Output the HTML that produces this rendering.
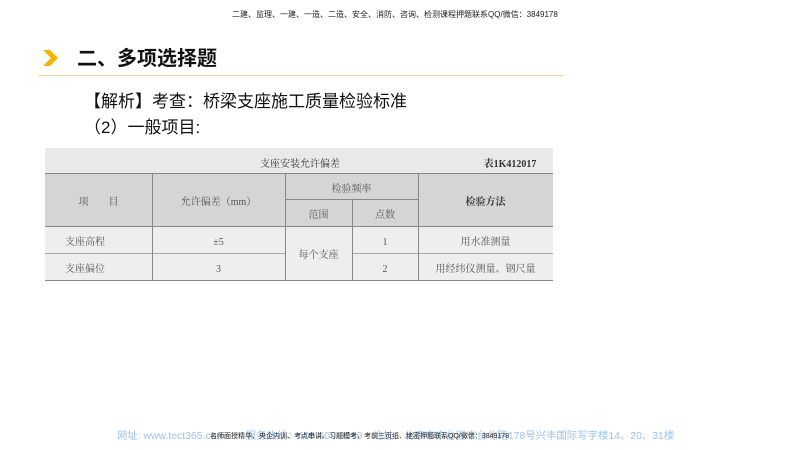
<!DOCTYPE html><html><head><meta charset="utf-8"><style>
body{margin:0;width:800px;height:450px;background:#fff;position:relative;overflow:hidden;font-family:"Liberation Sans","Noto Sans CJK SC",sans-serif}
.a{position:absolute;white-space:nowrap}
.t{position:absolute;left:45px;top:148px;width:508px;height:133px;background:#e9e9e9}
.c{position:absolute;font-family:"Liberation Serif","Noto Serif CJK SC",serif;font-size:10px;line-height:14px;color:#555;text-align:center;margin-top:3px}
.l{position:absolute;background:#888}
</style></head><body>
<div class="a" style="left:232px;top:9px;font-size:8px;color:#222">二建、监理、一建、一造、二造、安全、消防、咨询、检测课程押题联系QQ/微信：3849178</div>
<svg class="a" style="left:40px;top:48px" width="20" height="20"><path d="M3 2 L10 2 L18 10 L10 18 L3 18 L11 10 Z" fill="#f5b400"/></svg>
<div class="a" style="left:77px;top:42px;font-size:20px;font-weight:bold;color:#111">二、多项选择题</div>
<div style="position:absolute;left:38px;top:75px;width:525px;height:1px;background:#f3d9a0"></div>
<div class="a" style="left:84px;top:87px;font-size:17px;color:#111">【解析】考查：桥梁支座施工质量检验标准</div>
<div class="a" style="left:84px;top:113px;font-size:17px;color:#111">（2）一般项目:</div>
<div class="t"></div>
<div style="position:absolute;left:45px;top:173px;width:508px;height:53px;background:#d5d5d5"></div>
<div style="position:absolute;left:45px;top:226px;width:508px;height:54px;background:#eeeeee"></div>
<div class="l" style="left:45px;top:173px;width:508px;height:1px"></div>
<div class="l" style="left:45px;top:226px;width:508px;height:1px"></div>
<div class="l" style="left:45px;top:253px;width:240px;height:1px;background:#aaa"></div>
<div class="l" style="left:352px;top:253px;width:201px;height:1px;background:#aaa"></div>
<div class="l" style="left:285px;top:199px;width:133px;height:1px"></div>
<div class="l" style="left:45px;top:280px;width:508px;height:1px"></div>
<div class="l" style="left:152px;top:173px;width:1px;height:107px"></div>
<div class="l" style="left:285px;top:173px;width:1px;height:107px"></div>
<div class="l" style="left:352px;top:199px;width:1px;height:81px"></div>
<div class="l" style="left:418px;top:173px;width:1px;height:107px"></div>
<div class="c" style="left:240px;top:155px;width:120px;color:#333">支座安装允许偏差</div>
<div class="c" style="left:470px;top:155px;width:80px;font-weight:bold;color:#333">表1K412017</div>
<div class="c" style="left:45px;top:193px;width:107px">项　　目</div>
<div class="c" style="left:152px;top:193px;width:133px">允许偏差（mm）</div>
<div class="c" style="left:285px;top:180px;width:133px">检验频率</div>
<div class="c" style="left:285px;top:206px;width:67px">范围</div>
<div class="c" style="left:352px;top:206px;width:66px">点数</div>
<div class="c" style="left:418px;top:193px;width:135px;font-weight:bold;color:#333">检验方法</div>
<div class="c" style="left:45px;top:233px;width:80px">支座高程</div>
<div class="c" style="left:152px;top:233px;width:133px">±5</div>
<div class="c" style="left:285px;top:246px;width:67px">每个支座</div>
<div class="c" style="left:352px;top:233px;width:66px">1</div>
<div class="c" style="left:418px;top:233px;width:135px">用水准测量</div>
<div class="c" style="left:45px;top:260px;width:80px">支座偏位</div>
<div class="c" style="left:152px;top:260px;width:133px">3</div>
<div class="c" style="left:352px;top:260px;width:66px">2</div>
<div class="c" style="left:418px;top:260px;width:135px">用经纬仪测量、钢尺量</div>
<div class="a" style="left:117px;top:427px;font-size:10.4px;color:#9cc3ea">网址: www.tect365.com　　服务热线：400-600-8089　地址：北京市丰台区丰台北路178号兴丰国际写字楼14、20、31楼</div>
<div class="a" style="left:210px;top:431px;font-size:7px;color:#222">名师面授精华、央企内训、考点串讲、习题模考、考前三页纸、绝密押题联系QQ/微信：3849178</div>
</body></html>
